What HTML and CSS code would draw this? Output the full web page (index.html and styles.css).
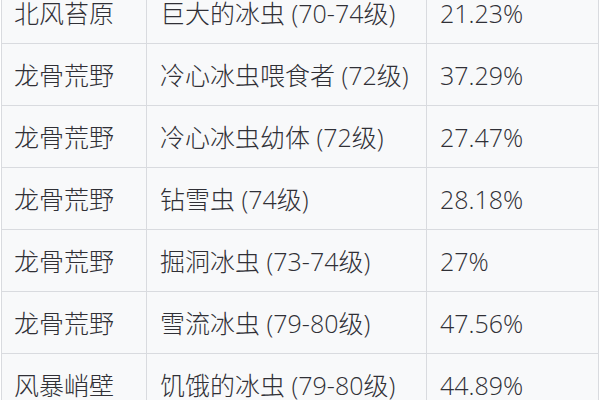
FILE: index.html
```html
<!DOCTYPE html>
<html lang="zh">
<head>
<meta charset="utf-8">
<link rel="stylesheet" href="styles.css">
</head>
<body>
<table class="drops">
  <colgroup>
    <col class="c-zone">
    <col class="c-mob">
    <col class="c-rate">
  </colgroup>
  <tbody>
    <tr><td>北风苔原</td><td>巨大的冰虫 (70-74级)</td><td>21.23%</td></tr>
    <tr><td>龙骨荒野</td><td>冷心冰虫喂食者 (72级)</td><td>37.29%</td></tr>
    <tr><td>龙骨荒野</td><td>冷心冰虫幼体 (72级)</td><td>27.47%</td></tr>
    <tr><td>龙骨荒野</td><td>钻雪虫 (74级)</td><td>28.18%</td></tr>
    <tr><td>龙骨荒野</td><td>掘洞冰虫 (73-74级)</td><td>27%</td></tr>
    <tr><td>龙骨荒野</td><td>雪流冰虫 (79-80级)</td><td>47.56%</td></tr>
    <tr><td>风暴峭壁</td><td>饥饿的冰虫 (79-80级)</td><td>44.89%</td></tr>
  </tbody>
</table>
</body>
</html>
```

FILE: styles.css
```css
html, body {
  margin: 0;
  padding: 0;
  background: #ffffff;
  overflow: hidden;
}

.drops {
  border-collapse: collapse;
  margin: -19px 0 0 1px;
  width: 598px;
  table-layout: fixed;
  background: #f8f9fa;
  font-family: "Open Sans", "Noto Sans CJK SC", sans-serif;
  font-size: 25px;
  font-weight: 300;
  color: #303036;
}

.c-zone { width: 145px; }
.c-mob { width: 280px; }
.c-rate { width: 172px; }

.drops tr {
  height: 62px;
}

.drops td {
  border: 1px solid #d9dbdf;
  padding: 0 0 0 12px;
  vertical-align: middle;
  white-space: nowrap;
  line-height: 1.2;
}

.drops td + td {
  padding-left: 13px;
}
```
